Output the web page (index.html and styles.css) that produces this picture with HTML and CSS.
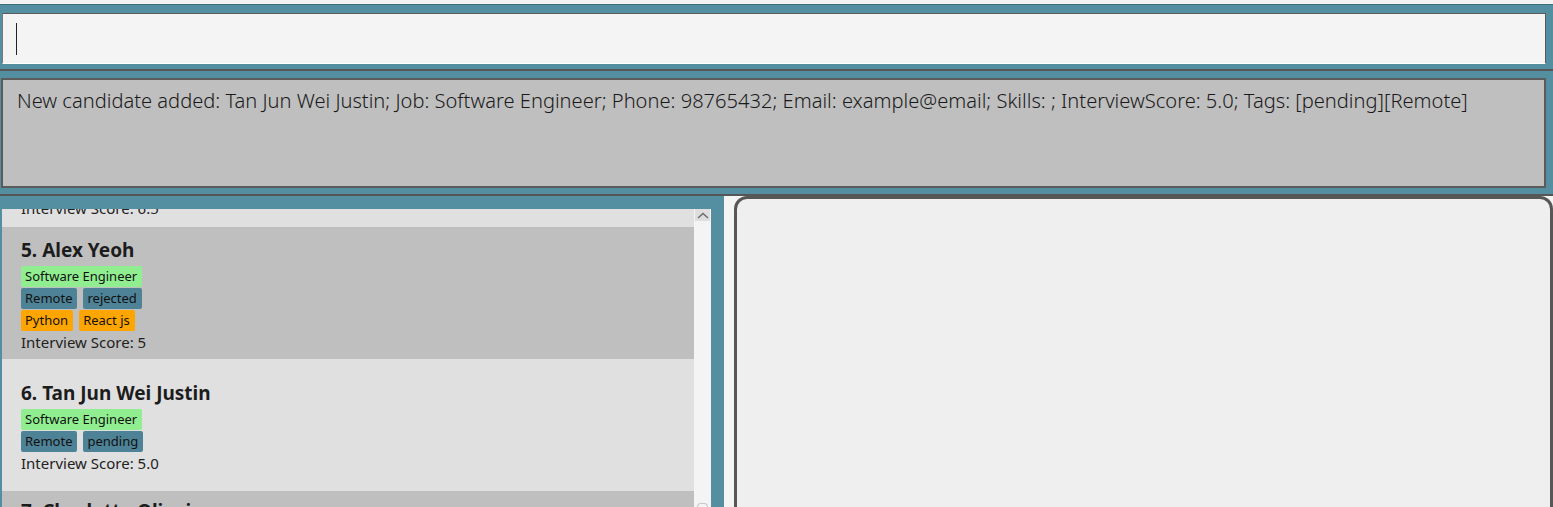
FILE: index.html
```html
<!DOCTYPE html>
<html>
<head>
<meta charset="utf-8">
<link rel="stylesheet" href="styles.css">
</head>
<body>
<div class="app">
  <div class="menu-strip"></div>
  <div class="command-area">
    <div class="command-box"><span class="caret"></span></div>
  </div>
  <div class="divider"></div>
  <div class="result-area">
    <div class="result-box">New candidate added: Tan Jun Wei Justin; Job: Software Engineer; Phone: 98765432; Email: example@email; Skills: ; InterviewScore: 5.0; Tags: [pending][Remote]</div>
  </div>
  <div class="divider"></div>
  <div class="main">
    <div class="list-pane">
      <div class="list">
        <div class="card partial light">
          <div class="score partial-score">Interview Score: 6.5</div>
        </div>
        <div class="card dark">
          <div class="name">5. Alex Yeoh</div>
          <div class="tag-row"><span class="tag job">Software Engineer</span></div>
          <div class="tag-row"><span class="tag status">Remote</span><span class="tag status">rejected</span></div>
          <div class="tag-row"><span class="tag skill">Python</span><span class="tag skill">React js</span></div>
          <div class="score">Interview Score: 5</div>
        </div>
        <div class="card light">
          <div class="name">6. Tan Jun Wei Justin</div>
          <div class="tag-row"><span class="tag job">Software Engineer</span></div>
          <div class="tag-row"><span class="tag status">Remote</span><span class="tag status">pending</span></div>
          <div class="score">Interview Score: 5.0</div>
        </div>
        <div class="card dark top">
          <div class="name">7. Charlotte Oliveira</div>
        </div>
      </div>
      <div class="scrollbar">
        <div class="scroll-btn">
          <svg width="12" height="7" viewBox="0 0 12 7"><path d="M1 6 L6 1.5 L11 6" fill="none" stroke="#6a6a6a" stroke-width="1.4"/></svg>
        </div>
        <div class="scroll-fill"></div>
        <div class="scroll-thumb-edge"></div>
      </div>
    </div>
    <div class="gutter"></div>
    <div class="detail-pane">
      <div class="detail-panel"></div>
    </div>
  </div>
</div>
</body>
</html>
```
FILE: styles.css
```css
* { box-sizing: border-box; }
html, body { margin: 0; padding: 0; }
body {
  width: 1553px;
  height: 507px;
  overflow: hidden;
  background: #538fa1;
  font-family: "Segoe UI", "Noto Sans", "Open Sans", sans-serif;
  color: #1f1f1f;
}
.app { display: flex; flex-direction: column; height: 507px; }
.menu-strip {
  height: 5px;
  background: #f2f2f2;
  border-bottom: 1px solid #3f6f7d;
}
.command-area {
  background: #538fa1;
  padding: 8px 7px 5px 2px;
}
.command-box {
  height: 51px;
  background: #f4f4f4;
  border: 1px solid #5a5a5a;
  border-bottom-color: #ffffff;
  border-left-color: #7a7a7a;
  display: flex;
  align-items: center;
  padding-left: 13px;
}
.caret {
  width: 1px;
  height: 32px;
  background: #222;
}
.divider { height: 2px; background: #565656; }
.result-area {
  background: #538fa1;
  padding: 7px 7px 6px 1px;
}
.result-box {
  height: 110px;
  background: #bfbfbf;
  border: 2px solid #5b5b5b;
  padding: 7px 14px;
  font-size: 20.1px;
  font-weight: 300;
  white-space: nowrap;
  overflow: hidden;
  color: #1a1a1a;
}
.main {
  flex: 1;
  display: flex;
  min-height: 0;
  background: #538fa1;
}
.list-pane {
  display: flex;
  margin-top: 13px;
  margin-left: 2px;
  width: 709px;
  overflow: hidden;
}
.list { width: 692px; display: flex; flex-direction: column; }
.card {
  height: 132px;
  flex: none;
  padding-left: 19px;
  padding-top: 3px;
  display: flex;
  flex-direction: column;
  justify-content: center;
}
.card.light { background: #e0e0e0; }
.card.dark { background: #bfbfbf; }
.card.partial {
  height: 18px;
  padding-top: 0;
  justify-content: flex-end;
  overflow: hidden;
}
.card.top { justify-content: flex-start; padding-top: 7px; }
.partial-score { margin-bottom: 8px; }
.name {
  font-size: 19px;
  font-weight: 700;
  line-height: 26px;
  color: #1c1c1c;
  margin-bottom: 3px;
}
.tag-row {
  display: flex;
  gap: 6px;
  margin-bottom: 1px;
}
.tag {
  font-size: 13px;
  line-height: 21px;
  height: 21px;
  padding: 0 5px 0 4px;
  border-radius: 2px;
  color: #111;
}
.tag.job { background: #90ee90; }
.tag.status { background: #4e8296; }
.tag.skill { background: #ffa500; }
.score {
  font-size: 15px;
  line-height: 21px;
  color: #222;
}
.scrollbar {
  width: 17px;
  background: #f4f4f4;
  flex: none;
  display: flex;
  flex-direction: column;
}
.scroll-btn {
  height: 12px;
  margin: 0 1px;
  background: #dedede;
  display: flex;
  align-items: center;
  justify-content: center;
}
.scroll-fill { flex: 1; }
.scroll-thumb-edge {
  height: 4px;
  margin: 0 3px 0 3px;
  border: 1px solid #c8c8c8;
  border-bottom: none;
  border-radius: 4px 4px 0 0;
}
.gutter { width: 13px; flex: none; }
.detail-pane {
  flex: 1;
  background: #f4f4f4;
  padding-left: 10px;
  display: flex;
}
.detail-panel {
  flex: 1;
  background: #efefef;
  border: 3px solid #575757;
  border-bottom: none;
  border-radius: 13px 13px 0 0;
}
```
